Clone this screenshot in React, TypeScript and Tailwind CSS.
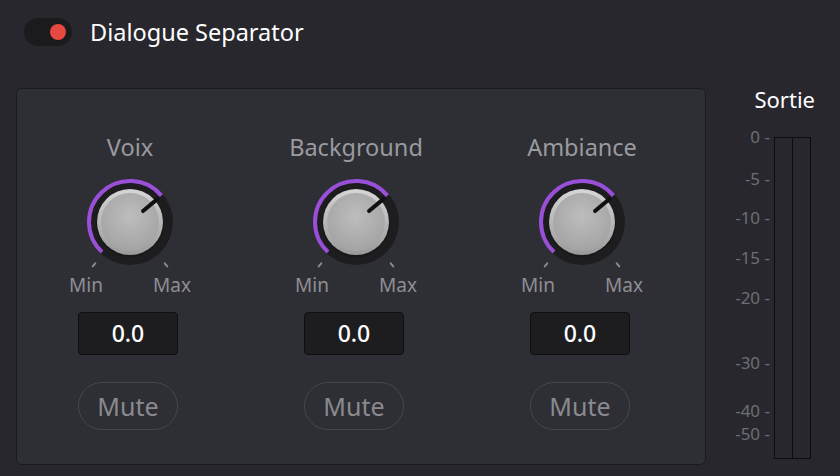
import React from 'react'

const FONT = { fontFamily: '"Noto Sans", "Open Sans", sans-serif' }

function polar(r: number, deg: number) {
  const a = (deg * Math.PI) / 180
  return { x: 60 + r * Math.sin(a), y: 50 - r * Math.cos(a) }
}

function Knob({ value }: { value: number }) {
  // value angle in degrees, clockwise from top; min is -137
  const s = polar(41, -137)
  const e = polar(41, value)
  const l1 = polar(17, value)
  const l2 = polar(36, value)
  const tMin1 = polar(54, -140)
  const tMin2 = polar(58, -140)
  const tMax1 = polar(54, 140)
  const tMax2 = polar(58, 140)
  return (
    <svg width="120" height="100" viewBox="0 0 120 100">
      <defs>
        <linearGradient id="rim" x1="0" y1="0" x2="0" y2="1">
          <stop offset="0" stopColor="#d6d6d6" />
          <stop offset="1" stopColor="#9a9a9a" />
        </linearGradient>
        <radialGradient id="face" cx="0.5" cy="0.4" r="0.6">
          <stop offset="0" stopColor="#bdbdbd" />
          <stop offset="1" stopColor="#a4a4a4" />
        </radialGradient>
      </defs>
      <circle cx="60" cy="50" r="43" fill="#1d1d20" />
      <path
        d={`M ${s.x} ${s.y} A 41 41 0 1 1 ${e.x} ${e.y}`}
        fill="none"
        stroke="#9a4fd8"
        strokeWidth="4"
      />
      <circle cx="60" cy="51" r="34" fill="#151517" opacity="0.6" />
      <circle cx="60" cy="50" r="33" fill="url(#rim)" />
      <circle cx="60" cy="50" r="29" fill="url(#face)" />
      <line x1={l1.x} y1={l1.y} x2={l2.x} y2={l2.y} stroke="#111" strokeWidth="4" strokeLinecap="round" />
      <line x1={tMin1.x} y1={tMin1.y} x2={tMin2.x} y2={tMin2.y} stroke="#8a8a8f" strokeWidth="2" strokeLinecap="round" />
      <line x1={tMax1.x} y1={tMax1.y} x2={tMax2.x} y2={tMax2.y} stroke="#8a8a8f" strokeWidth="2" strokeLinecap="round" />
    </svg>
  )
}

function Channel({ label }: { label: string }) {
  return (
    <div className="w-[226px] flex flex-col items-center">
      <div className="h-[30px] leading-[30px] text-[23.5px] text-[#9a9a9f]">{label}</div>
      <div className="mt-[10px]">
        <Knob value={50} />
      </div>
      <div className="mt-[2px] w-[122px] flex justify-between h-[22px] leading-[22px] text-[19px] text-[#8e8e93]">
        <span>Min</span>
        <span>Max</span>
      </div>
      <div className="mt-[16px] w-[100px] h-[43px] mr-[4px] rounded-[4px] bg-[#1d1d1f] border border-[#0f0f10] flex items-center justify-center text-[23px] font-medium text-white">
        0.0
      </div>
      <button className="mt-[27px] w-[100px] h-[48px] mr-[4px] rounded-full border-[1.5px] border-[#46474c] text-[25px] leading-[30px] text-[#8a8a8e]">
        Mute
      </button>
    </div>
  )
}

const scale = [
  { t: '0', y: 0 },
  { t: '-5', y: 42 },
  { t: '-10', y: 81 },
  { t: '-15', y: 121 },
  { t: '-20', y: 161 },
  { t: '-30', y: 226 },
  { t: '-40', y: 274 },
  { t: '-50', y: 297 },
]

export default function App() {
  return (
    <div className="w-[840px] h-[476px] bg-[#28272d] overflow-hidden" style={FONT}>
      {/* Header */}
      <div className="flex items-center pl-[24px] pt-[18px]">
        <div className="w-[48px] h-[28px] rounded-full bg-[#1b1b1d] flex items-center justify-end pr-[6px]">
          <div className="w-[16px] h-[16px] rounded-full bg-[#e5493f]" />
        </div>
        <span className="ml-[18px] text-[23.5px] text-white leading-[28px]">Dialogue Separator</span>
      </div>

      <div className="flex mt-[42px]">
        {/* Panel */}
        <div className="ml-[16px] w-[690px] h-[377px] rounded-[6px] bg-[#2e2f35] border border-[#1b1b1e] flex pt-[43px]">
          <Channel label="Voix" />
          <Channel label="Background" />
          <Channel label="Ambiance" />
        </div>

        {/* Output meter */}
        <div className="flex-1 flex flex-col">
          <div className="h-[22px] leading-[22px] text-[22px] text-white text-right pr-[25px]">Sortie</div>
          <div className="relative mt-[27px] h-[322px]">
            {scale.map(s => (
              <div
                key={s.t}
                className="absolute right-[70px] text-[17px] leading-[20px] text-[#6e6e73] whitespace-nowrap"
                style={{ top: s.y - 10 }}
              >
                {s.t} -
              </div>
            ))}
            <div className="absolute left-[68px] top-0 w-[37px] h-[322px] border-[1.5px] border-[#0c0c0d] flex">
              <div className="flex-1 border-r-[1.5px] border-[#0c0c0d]" />
              <div className="flex-1" />
            </div>
          </div>
        </div>
      </div>
    </div>
  )
}
